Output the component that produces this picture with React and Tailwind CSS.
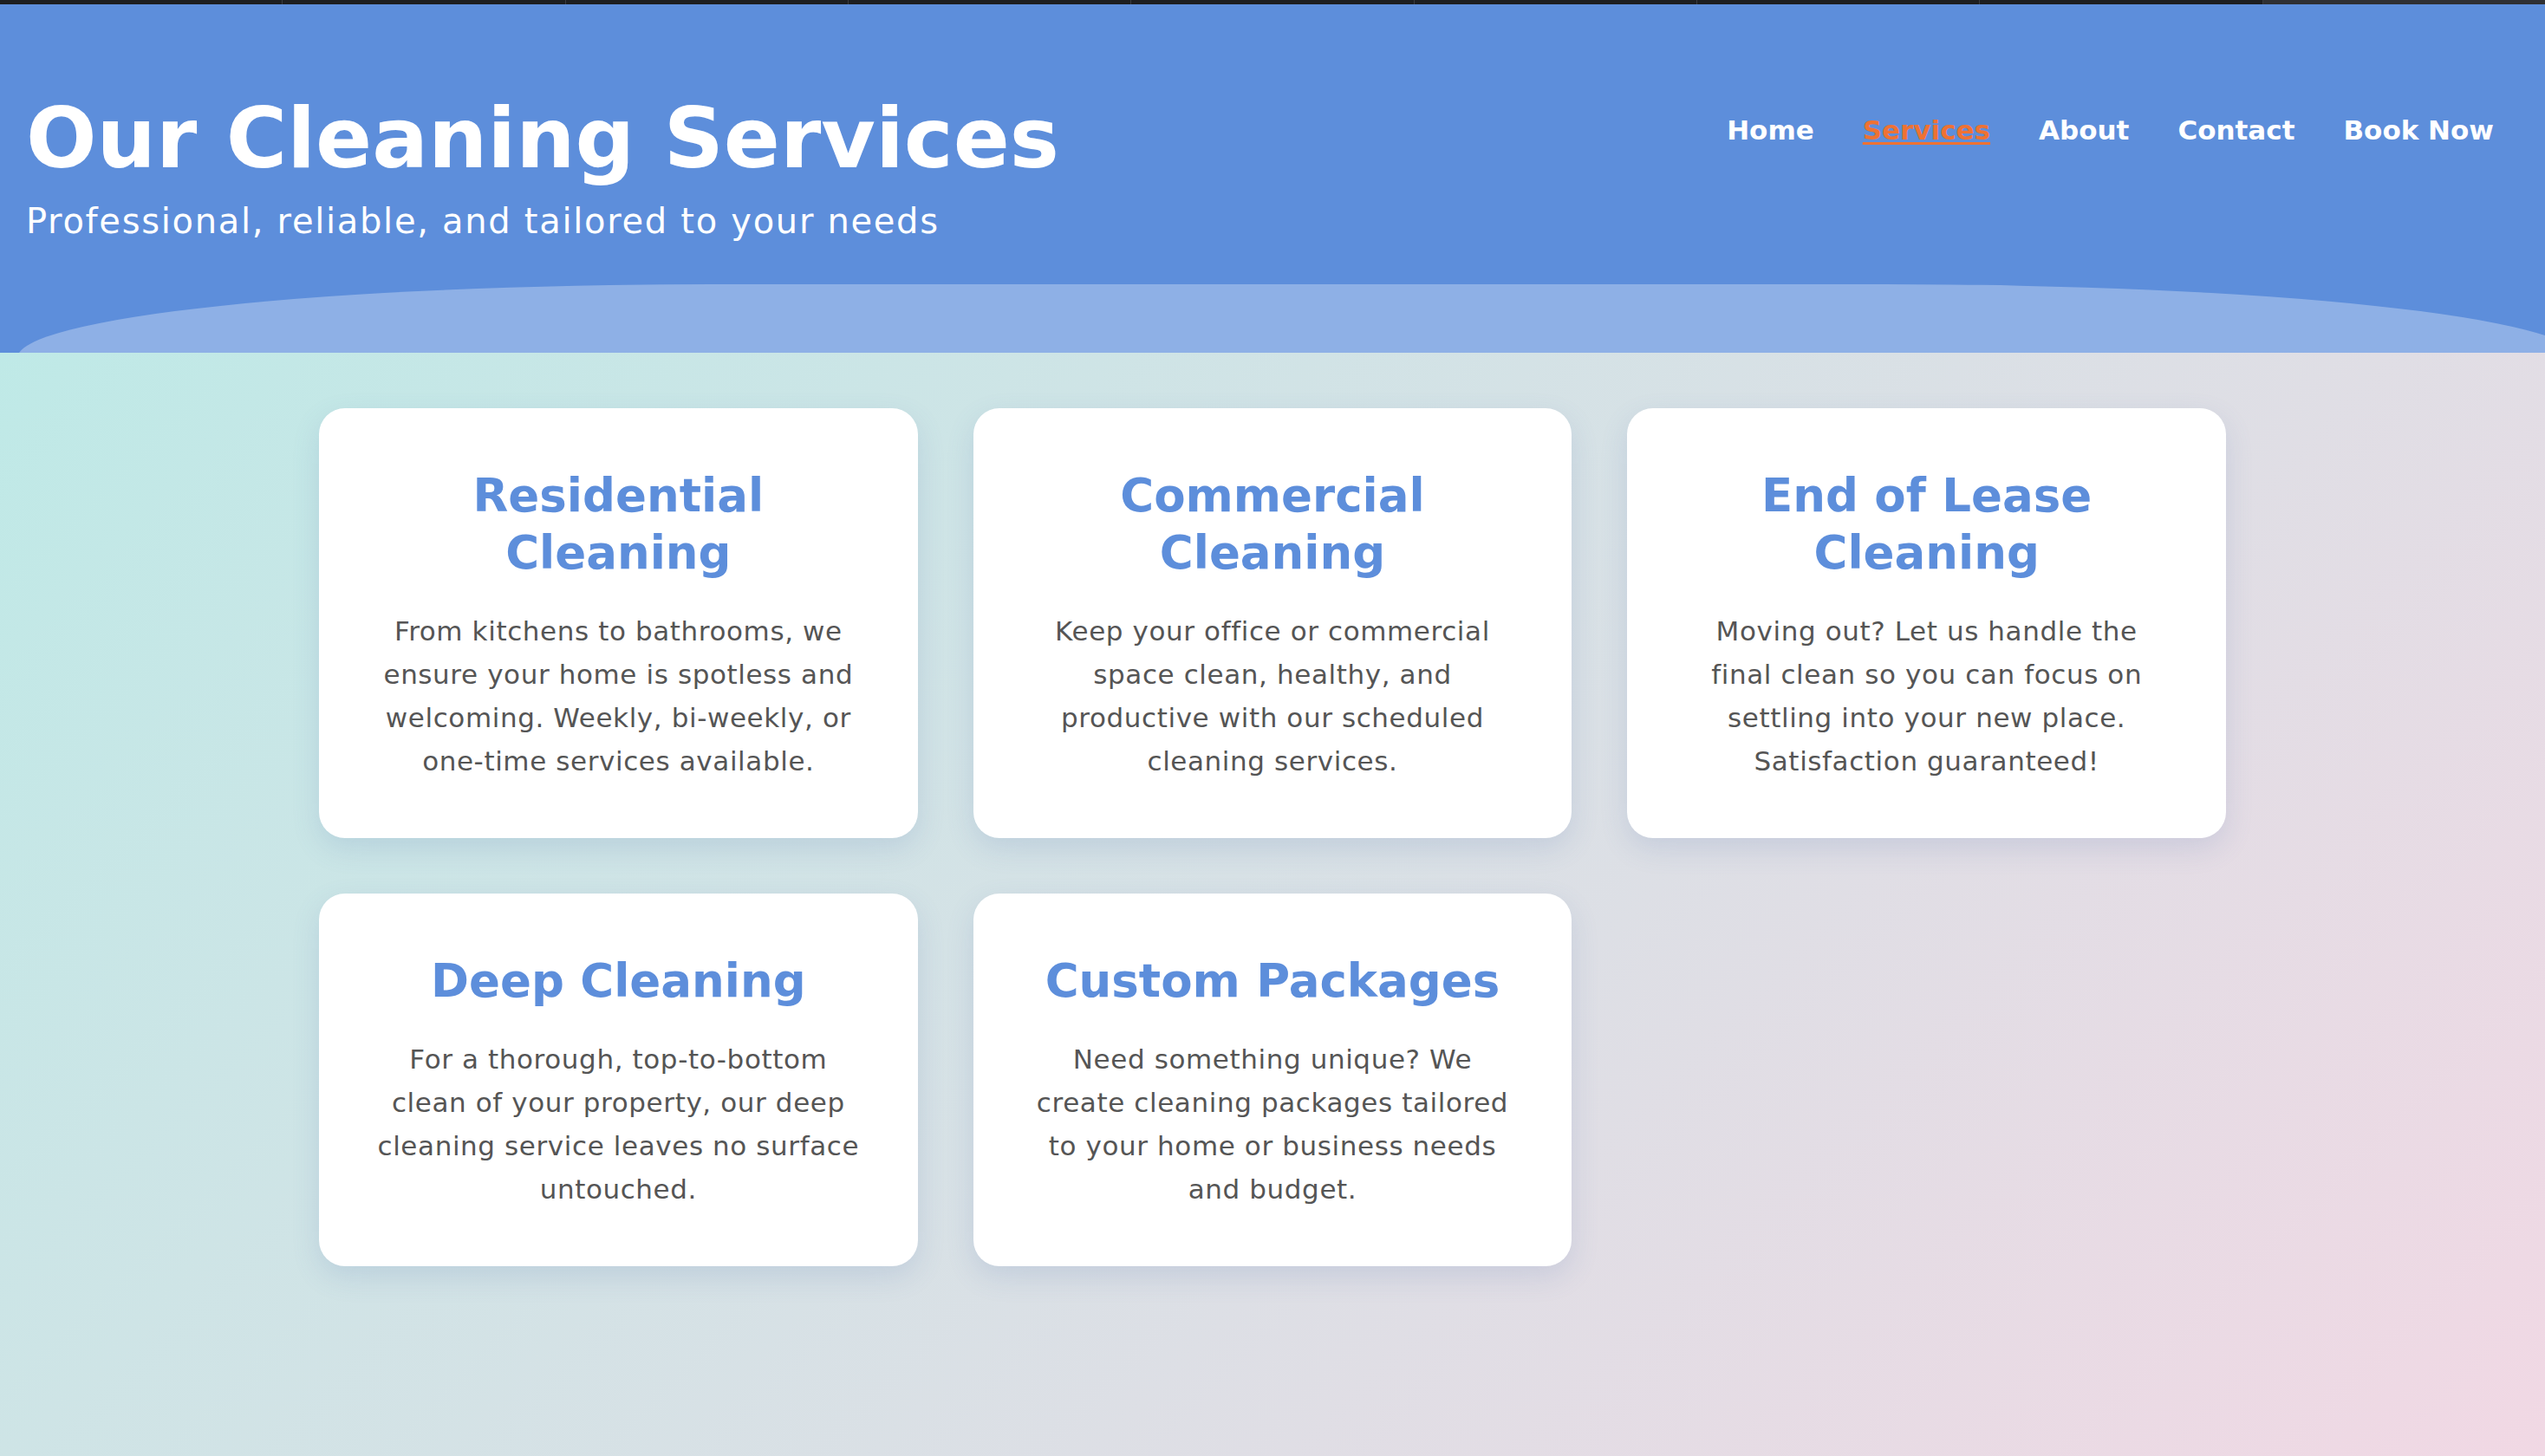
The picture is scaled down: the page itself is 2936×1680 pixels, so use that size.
import React from 'react';

// lines are kept as they break in the design
const services = [
  {
    title: 'Residential Cleaning',
    lines: ['From kitchens to bathrooms, we', 'ensure your home is spotless and', 'welcoming. Weekly, bi-weekly, or', 'one-time services available.'],
  },
  {
    title: 'Commercial Cleaning',
    lines: ['Keep your office or commercial', 'space clean, healthy, and', 'productive with our scheduled', 'cleaning services.'],
  },
  {
    title: 'End of Lease Cleaning',
    lines: ['Moving out? Let us handle the', 'final clean so you can focus on', 'settling into your new place.', 'Satisfaction guaranteed!'],
  },
  {
    title: 'Deep Cleaning',
    lines: ['For a thorough, top-to-bottom', 'clean of your property, our deep', 'cleaning service leaves no surface', 'untouched.'],
  },
  {
    title: 'Custom Packages',
    lines: ['Need something unique? We', 'create cleaning packages tailored', 'to your home or business needs', 'and budget.'],
  },
];

const links = ['Home', 'Services', 'About', 'Contact', 'Book Now'];

function ServiceCard({ title, lines }) {
  return (
    <div className="bg-white rounded-[30px] px-[56px] pt-[68px] pb-[64px] text-center shadow-[0_12px_32px_rgba(80,115,175,0.16)]">
      <h3 className="text-[53px] font-bold leading-[66px] mb-[32px] text-[#5d8edb]">{title}</h3>
      <p className="text-[31px] leading-[50px] tracking-[0.6px] text-[#555555] whitespace-nowrap">
        {lines.map((line, i) => (
          <React.Fragment key={i}>
            {line}
            {i < lines.length - 1 && <br />}
          </React.Fragment>
        ))}
      </p>
    </div>
  );
}

function App() {
  return (
    <div className="min-h-screen bg-[linear-gradient(135deg,#baebe7,#f1d8e4)] font-['DejaVu_Sans',sans-serif]">
      {/* strip along the very top */}
      <div className="flex h-[5px] bg-[#1d1e20]">
        {[0, 1, 2, 3, 4, 5, 6, 7].map((i) => (
          <div key={i} className="flex-1 border-r border-[#3a3b3e]" />
        ))}
        <div className="flex-1 bg-[#2f3033]" />
      </div>

      <header className="relative overflow-hidden bg-[#5d8edb] h-[402px] flex justify-between items-start pl-[30px] pr-[59px] pt-[98px]">
        <div className="relative z-10">
          <h1 className="text-[96px] font-bold leading-[114px] text-white">Our Cleaning Services</h1>
          <p className="mt-[8px] text-[40px] leading-[60px] tracking-[1.7px] text-white">
            Professional, reliable, and tailored to your needs
          </p>
        </div>
        <nav className="relative z-10 mt-[23px] flex gap-[56px]">
          {links.map((link) => (
            <a
              key={link}
              href="#"
              className={
                link === 'Services'
                  ? 'text-[31px] font-bold leading-[48px] text-[#ee7233] underline decoration-[3px] underline-offset-[3px]'
                  : 'text-[31px] font-bold leading-[48px] text-white'
              }
            >
              {link}
            </a>
          ))}
        </nav>
        {/* soft wave at the bottom of the header */}
        <div className="absolute left-[20px] right-[-38px] top-[323px] h-[200px] rounded-[800px/85px] bg-white/30" />
      </header>

      <main className="pt-[64px] pb-[64px]">
        <div className="mx-auto max-w-[2200px] grid grid-cols-3 gap-[64px]">
          {services.map((s) => (
            <ServiceCard key={s.title} title={s.title} lines={s.lines} />
          ))}
        </div>
      </main>
    </div>
  );
}

export default App;
